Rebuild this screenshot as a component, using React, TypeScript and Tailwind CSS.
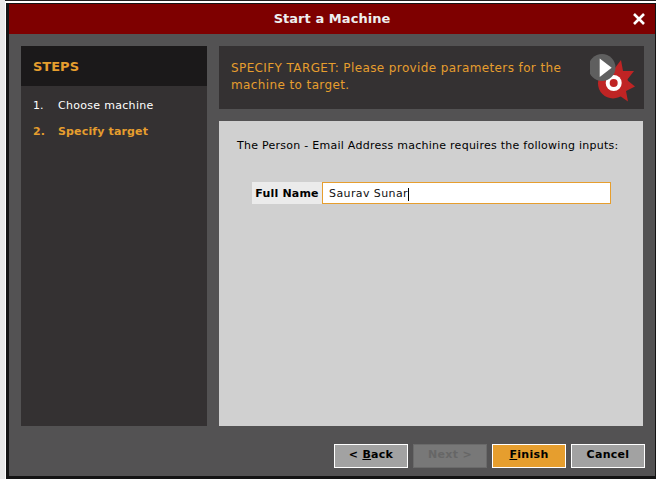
const App = () => {
    return (
        <div className="w-[656px] h-[479px] overflow-hidden bg-[#e8e8e8] pl-[5px] flex flex-col" style={{ fontFamily: '"DejaVu Sans", sans-serif' }}>
            <div className="h-[1px] bg-[#222222]" />
            <div className="h-[2px] bg-white" />
            <div className="flex-1 min-h-0 bg-[#141414] border-l border-white pl-[3px] pt-[1px] pr-[1px] pb-[3px] flex">
                <div className="flex-1 min-w-0 flex flex-col bg-[#535253]">
                    <div className="h-[30px] bg-[#7e0000] flex items-center justify-center relative">
                        <h1 className="text-[13px] font-bold tracking-[0.05px] text-[#eeeeee]">Start a Machine</h1>
                        <svg className="absolute top-[8px] right-[9px] w-[14px] h-[14px]" viewBox="0 0 14 14">
                            <path d="M2 2 L12 12 M12 2 L2 12" stroke="#ffffff" strokeWidth="2.6" />
                        </svg>
                    </div>
                    <div className="flex-1 min-h-0 flex gap-[12px] pl-[12px] pr-[11px] pt-[12px]">
                        <div className="w-[186px] h-[380px] bg-[#343132] flex flex-col">
                            <div className="h-[40px] bg-[#1b191a] flex items-center pl-[12px] pt-[1px] text-[13px] font-bold text-[#e69e2e]">STEPS</div>
                            <ol className="mt-[12px] flex flex-col gap-[10px] pl-[12px] text-[11px]">
                                <li className="flex h-[16px] items-center text-white">
                                    <span className="w-[25px]">1.</span>
                                    <span className="tracking-[0.3px]">Choose machine</span>
                                </li>
                                <li className="flex h-[16px] items-center font-bold text-[#e69e2e]">
                                    <span className="w-[25px]">2.</span>
                                    <span className="tracking-[0.15px]">Specify target</span>
                                </li>
                            </ol>
                        </div>
                        <div className="flex-1 min-w-0 flex flex-col gap-[12px]">
                            <div className="h-[63px] bg-[#343132] flex items-center justify-between pl-[12px] pr-[8px]">
                                <p className="w-[345px] pb-[2px] text-[12px] leading-[17px] tracking-[0.39px] text-[#e69e2e]">SPECIFY TARGET: Please provide parameters for the machine to target.</p>
                                <Logo />
                            </div>
                            <div className="w-[424px] h-[305px] bg-[#d0d0d0] flex flex-col">
                                <p className="mt-[17px] ml-[18px] text-[11px] leading-[16px] tracking-[0.26px] whitespace-nowrap text-black">The Person - Email Address machine requires the following inputs:</p>
                                <div className="mt-[28px] ml-[33px] flex h-[22px]">
                                    <label className="w-[70px] pt-[2px] bg-[#ebebeb] flex items-center justify-center text-[11px] font-bold tracking-[0.2px] text-black">Full Name</label>
                                    <div className="w-[289px] pt-[2px] bg-white border border-[#e69e2e] flex items-center pl-[6px] text-[11px] tracking-[0.4px] text-[#111111]">
                                        Saurav Sunar
                                        <span className="w-[1px] h-[13px] bg-black" />
                                    </div>
                                </div>
                            </div>
                        </div>
                    </div>
                    <div className="h-[34px] pt-[6px] flex justify-end gap-[5px] pr-[10px] mb-[4px]">
                        <button className="w-[74px] h-[24px] pb-[1px] bg-[#a2a2a2] border border-white text-[11px] font-bold tracking-[0.3px] text-black">&lt; <span className="underline">B</span>ack</button>
                        <button className="w-[74px] h-[24px] pb-[1px] bg-[#787878] border border-[#6a6a6a] text-[11px] font-bold tracking-[0.3px] text-[#666666]">Next &gt;</button>
                        <button className="w-[74px] h-[24px] pb-[1px] bg-[#e69e2e] border border-white text-[11px] font-bold tracking-[0.3px] text-black"><span className="underline">F</span>inish</button>
                        <button className="w-[74px] h-[24px] pb-[1px] bg-[#a2a2a2] border border-white text-[11px] font-bold tracking-[0.3px] text-black">Cancel</button>
                    </div>
                </div>
            </div>
        </div>
    )
}

const Logo = () => {
    return (
        <svg className="w-[46px] h-[50px] shrink-0" viewBox="0 0 46 50">
            <polygon points="25,15 31,7 33,18 44,18 37,27 45,33.5 36,38 38,48.5 30,43 23,45" fill="#bf2424" />
            <circle cx="23" cy="30.5" r="15" fill="#bf2424" />
            <circle cx="23.7" cy="30" r="8" fill="#ffffff" />
            <circle cx="23.7" cy="30" r="4" fill="#bf2424" />
            <circle cx="12" cy="14.5" r="13.5" fill="#5f5f5f" />
            <path d="M9.7 5.5 L21.7 14.7 L9.7 24 Z" fill="#ffffff" />
        </svg>
    )
}

export default App
